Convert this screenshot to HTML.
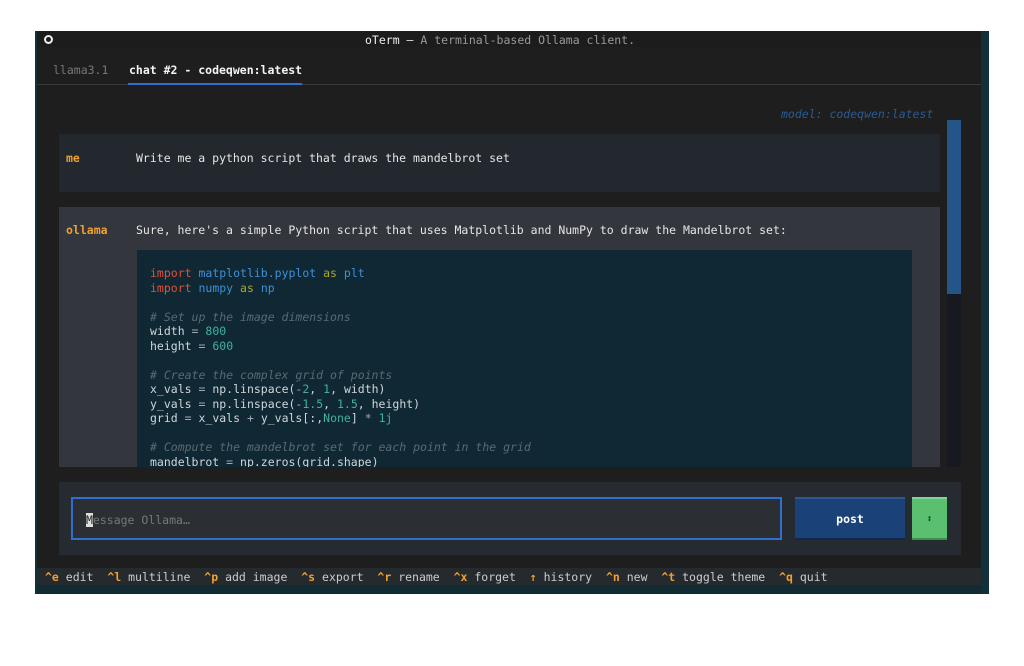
<!DOCTYPE html>
<html><head><meta charset="utf-8"><style>
*{margin:0;padding:0;box-sizing:border-box}
body{width:1024px;height:666px;background:#fff;position:relative;overflow:hidden;font-family:"DejaVu Sans Mono","Liberation Mono",monospace;font-size:11.5px;line-height:14.5px;color:#e6e6e6}
.a{position:absolute;white-space:pre}
.win{position:absolute;left:35px;top:31px;width:954px;height:563px;background:#1e1e1e;border-left:2px solid #11303a;border-right:8px solid #11303a}
.o{color:#f0a030;font-weight:bold}
.k{color:#e0503a}.m{color:#3f8fd8}.as{color:#a8a832}.c{color:#5a6a72;font-style:italic}.n{color:#40b0a0}.p{color:#a0a8b0}
</style></head><body>
<div class="win"></div>
<div class="a" style="left:37px;top:31px;width:944px;height:16px;background:#1c1c1c"></div>
<div class="a" style="left:44px;top:35px;width:9px;height:9px;border:2px solid #eee;border-radius:50%"></div>
<div class="a" style="left:365px;top:33px;color:#eee">oTerm — <span style="color:#999">A terminal-based Ollama client.</span></div>
<div class="a" style="left:53px;top:63px;color:#777">llama3.1</div>
<div class="a" style="left:129px;top:63px;color:#f4f4f4;font-weight:bold">chat #2 - codeqwen:latest</div>
<div class="a" style="left:37px;top:84px;width:944px;height:1px;background:#3a3a3a"></div>
<div class="a" style="left:128px;top:83px;width:174px;height:2px;background:#2f6fd0"></div>
<div class="a" style="left:781px;top:107px;color:#2a5a94;font-style:italic">model: codeqwen:latest</div>
<div class="a" style="left:947px;top:120px;width:14px;height:347px;background:#161a20"></div>
<div class="a" style="left:947px;top:120px;width:14px;height:174px;background:#245589"></div>
<div class="a" style="left:59px;top:134px;width:881px;height:58px;background:#23272e"></div>
<div class="a o" style="left:66px;top:151px">me</div>
<div class="a" style="left:136px;top:151px">Write me a python script that draws the mandelbrot set</div>
<div class="a" style="left:59px;top:207px;width:881px;height:260px;background:#33363d"></div>
<div class="a o" style="left:66px;top:223px">ollama</div>
<div class="a" style="left:136px;top:223px">Sure, here's a simple Python script that uses Matplotlib and NumPy to draw the Mandelbrot set:</div>
<div class="a" style="left:137px;top:250px;width:775px;height:217px;overflow:hidden;background:#0f2833"><div class="a" style="left:13px;top:16px;color:#cfd6da"><span class="k">import</span> <span class="m">matplotlib.pyplot</span> <span class="as">as</span> <span class="m">plt</span>
<span class="k">import</span> <span class="m">numpy</span> <span class="as">as</span> <span class="m">np</span>

<span class="c"># Set up the image dimensions</span>
width <span class="p">=</span> <span class="n">800</span>
height <span class="p">=</span> <span class="n">600</span>

<span class="c"># Create the complex grid of points</span>
x_vals <span class="p">=</span> np.linspace(<span class="p">-</span><span class="n">2</span>, <span class="n">1</span>, width)
y_vals <span class="p">=</span> np.linspace(<span class="p">-</span><span class="n">1.5</span>, <span class="n">1.5</span>, height)
grid <span class="p">=</span> x_vals <span class="p">+</span> y_vals[:,<span class="n">None</span>] <span class="p">*</span> <span class="n">1j</span>

<span class="c"># Compute the mandelbrot set for each point in the grid</span>
mandelbrot <span class="p">=</span> np.zeros(grid.shape)</div></div>
<div class="a" style="left:59px;top:482px;width:902px;height:73px;background:#262b31"></div>
<div class="a" style="left:71px;top:497px;width:711px;height:43px;background:#2b2f33;border:2px solid #2f6fd0"></div>
<div class="a" style="left:86px;top:513px;color:#777"><span style="background:#ddd;color:#222">M</span>essage Ollama…</div>
<div class="a" style="left:795px;top:497px;width:110px;height:43px;background:#1b4278;border-top:2px solid #2d5a94;border-bottom:2px solid #0e2850;color:#fff;font-weight:bold;text-align:center;line-height:41px">post</div>
<div class="a" style="left:912px;top:497px;width:35px;height:43px;background:#5ac070;border-top:2px solid #7ad890;border-bottom:2px solid #3a9050;color:#123;text-align:center;line-height:41px;font-size:9px">↕</div>
<div class="a" style="left:37px;top:568px;width:944px;height:17px;background:#252a2e"></div>
<div class="a" style="left:37px;top:585px;width:944px;height:9px;background:#112b33"></div>
<div class="a" style="left:45px;top:570px;color:#ccc"><span class="o">^e</span> edit  <span class="o">^l</span> multiline  <span class="o">^p</span> add image  <span class="o">^s</span> export  <span class="o">^r</span> rename  <span class="o">^x</span> forget  <span class="o">↑</span> history  <span class="o">^n</span> new  <span class="o">^t</span> toggle theme  <span class="o">^q</span> quit</div>
</body></html>
